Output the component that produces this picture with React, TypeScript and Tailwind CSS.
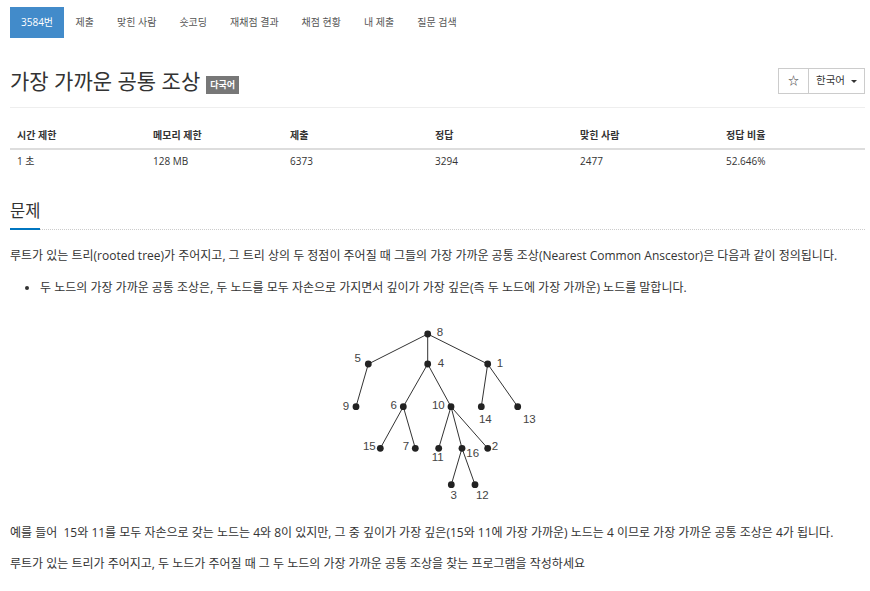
import React from 'react';

const FONT = { fontFamily: '"Open Sans", "Noto Sans CJK KR", sans-serif' };

const tabs = ['3584번', '제출', '맞힌 사람', '숏코딩', '재채점 결과', '채점 현황', '내 제출', '질문 검색'];

const stats = [
    ['시간 제한', '1 초'],
    ['메모리 제한', '128 MB'],
    ['제출', '6373'],
    ['정답', '3294'],
    ['맞힌 사람', '2477'],
    ['정답 비율', '52.646%'],
];

// node coordinates in page pixels
const nodes: Record<string, [number, number]> = {
    '8': [426.7, 335], '5': [367.3, 365], '4': [426.7, 365], '1': [486.7, 365],
    '9': [355, 407.7], '6': [402.3, 407.7], '10': [450, 407.7], '14': [480.3, 407.7], '13': [516.7, 407.7],
    '15': [379.3, 449.3], '7': [414.3, 449.3], '11': [437.7, 449.3], '16': [461, 449.3], '2': [486.7, 449.3],
    '3': [450.3, 485.7], '12': [474, 485.7],
};

const edges = [
    ['8', '5'], ['8', '4'], ['8', '1'], ['5', '9'], ['4', '6'], ['4', '10'], ['1', '14'], ['1', '13'],
    ['6', '15'], ['6', '7'], ['10', '11'], ['10', '16'], ['10', '2'], ['16', '3'], ['16', '12'],
];

const labels: [string, number, number][] = [
    ['8', 439, 333], ['5', 356.7, 359.3], ['4', 440, 364], ['1', 499, 364],
    ['9', 345, 407], ['6', 392.7, 406], ['10', 437.3, 406], ['14', 484.3, 419.7], ['13', 528.3, 419.7],
    ['15', 368.3, 447.3], ['7', 405, 447], ['11', 436.7, 458.3], ['16', 471.7, 453.7], ['2', 494, 447],
    ['3', 452.7, 495.7], ['12', 481.3, 495.7],
];

function Tree() {
    return (
        <svg width="200" height="180" viewBox="337 322 200 180">
            {edges.map(([a, b]) => (
                <line key={a + b} x1={nodes[a][0]} y1={nodes[a][1]} x2={nodes[b][0]} y2={nodes[b][1]} stroke="#333" strokeWidth="1" />
            ))}
            {Object.entries(nodes).map(([k, [x, y]]) => (
                <circle key={k} cx={x} cy={y} r="3.4" fill="#222" />
            ))}
            {labels.map(([t, x, y]) => (
                <text key={t} x={x} y={y} fontSize="11.5" fill="#444" textAnchor="middle" dominantBaseline="central" fontFamily='"Liberation Sans", sans-serif'>
                    {t}
                </text>
            ))}
        </svg>
    );
}

export default function App() {
    return (
        <div className="min-h-screen bg-white pl-[10px] pr-[5px] text-[#333]" style={FONT}>
            {/* problem menu */}
            <div className="flex pt-[7px]">
                {tabs.map((t, i) => (
                    <div
                        key={t}
                        className={
                            i === 0
                                ? 'h-[31px] px-[11px] flex items-center text-[10px] text-white bg-[#428bca]'
                                : 'h-[31px] px-[11.5px] flex items-center text-[10px] text-[#555]'
                        }
                    >
                        {t}
                    </div>
                ))}
            </div>

            {/* title */}
            <div className="mt-[30px] pb-[13px] border-b border-[#eee] flex items-center justify-between">
                <div className="flex items-end h-[26px]">
                    <h1 className="text-[21px] leading-[26px] text-[#333]">가장 가까운 공통 조상</h1>
                    <span className="ml-[6px] h-[18px] px-[4px] flex items-center bg-[#777] text-white text-[9px] font-bold">다국어</span>
                </div>
                <div className="flex h-[26px]">
                    <button className="w-[31px] border border-[#ccc] flex items-center justify-center text-[11px] text-[#333]">☆</button>
                    <button className="w-[57px] -ml-px border border-[#ccc] flex items-center justify-center gap-[6px] text-[10.5px] text-[#333]">
                        한국어
                        <span className="w-0 h-0 border-l-[3px] border-r-[3px] border-t-[3px] border-l-transparent border-r-transparent border-t-[#333]" />
                    </button>
                </div>
            </div>

            {/* stats table */}
            <div className="mt-[14px] grid grid-cols-[136px_137px_145px_145px_146px_1fr] text-[10px]">
                {stats.map(([h]) => (
                    <div key={h} className="h-[28px] pl-[7px] flex items-center font-bold border-b-2 border-[#ddd]">{h}</div>
                ))}
                {stats.map(([h, v]) => (
                    <div key={h + v} className="h-[23px] pl-[7px] flex items-center">{v}</div>
                ))}
            </div>

            {/* section heading */}
            <div className="mt-[26px] border-b border-dotted border-[#ccc]">
                <span className="inline-block text-[16.5px] leading-[21px] pb-[7px] border-b-2 border-[#0076c0] -mb-px text-[#333]">문제</span>
            </div>

            <div className="text-[12px] leading-[18px]">
                <p className="mt-[17px]">
                    루트가 있는 트리(rooted tree)가 주어지고, 그 트리 상의 두 정점이 주어질 때 그들의 가장 가까운 공통 조상(Nearest Common Anscestor)은 다음과 같이 정의됩니다.
                </p>
                <ul className="mt-[14px] pl-[30px] list-disc">
                    <li>두 노드의 가장 가까운 공통 조상은, 두 노드를 모두 자손으로 가지면서 깊이가 가장 깊은(즉 두 노드에 가장 가까운) 노드를 말합니다.</li>
                </ul>
                <div className="mt-[24px] flex justify-center">
                    <Tree />
                </div>
                <p className="mt-[23px]">예를 들어&nbsp; 15와 11를 모두 자손으로 갖는 노드는 4와 8이 있지만, 그 중 깊이가 가장 깊은(15와 11에 가장 가까운) 노드는 4 이므로 가장 가까운 공통 조상은 4가 됩니다.</p>
                <p className="mt-[13px]">루트가 있는 트리가 주어지고, 두 노드가 주어질 때 그 두 노드의 가장 가까운 공통 조상을 찾는 프로그램을 작성하세요</p>
            </div>
        </div>
    );
}
